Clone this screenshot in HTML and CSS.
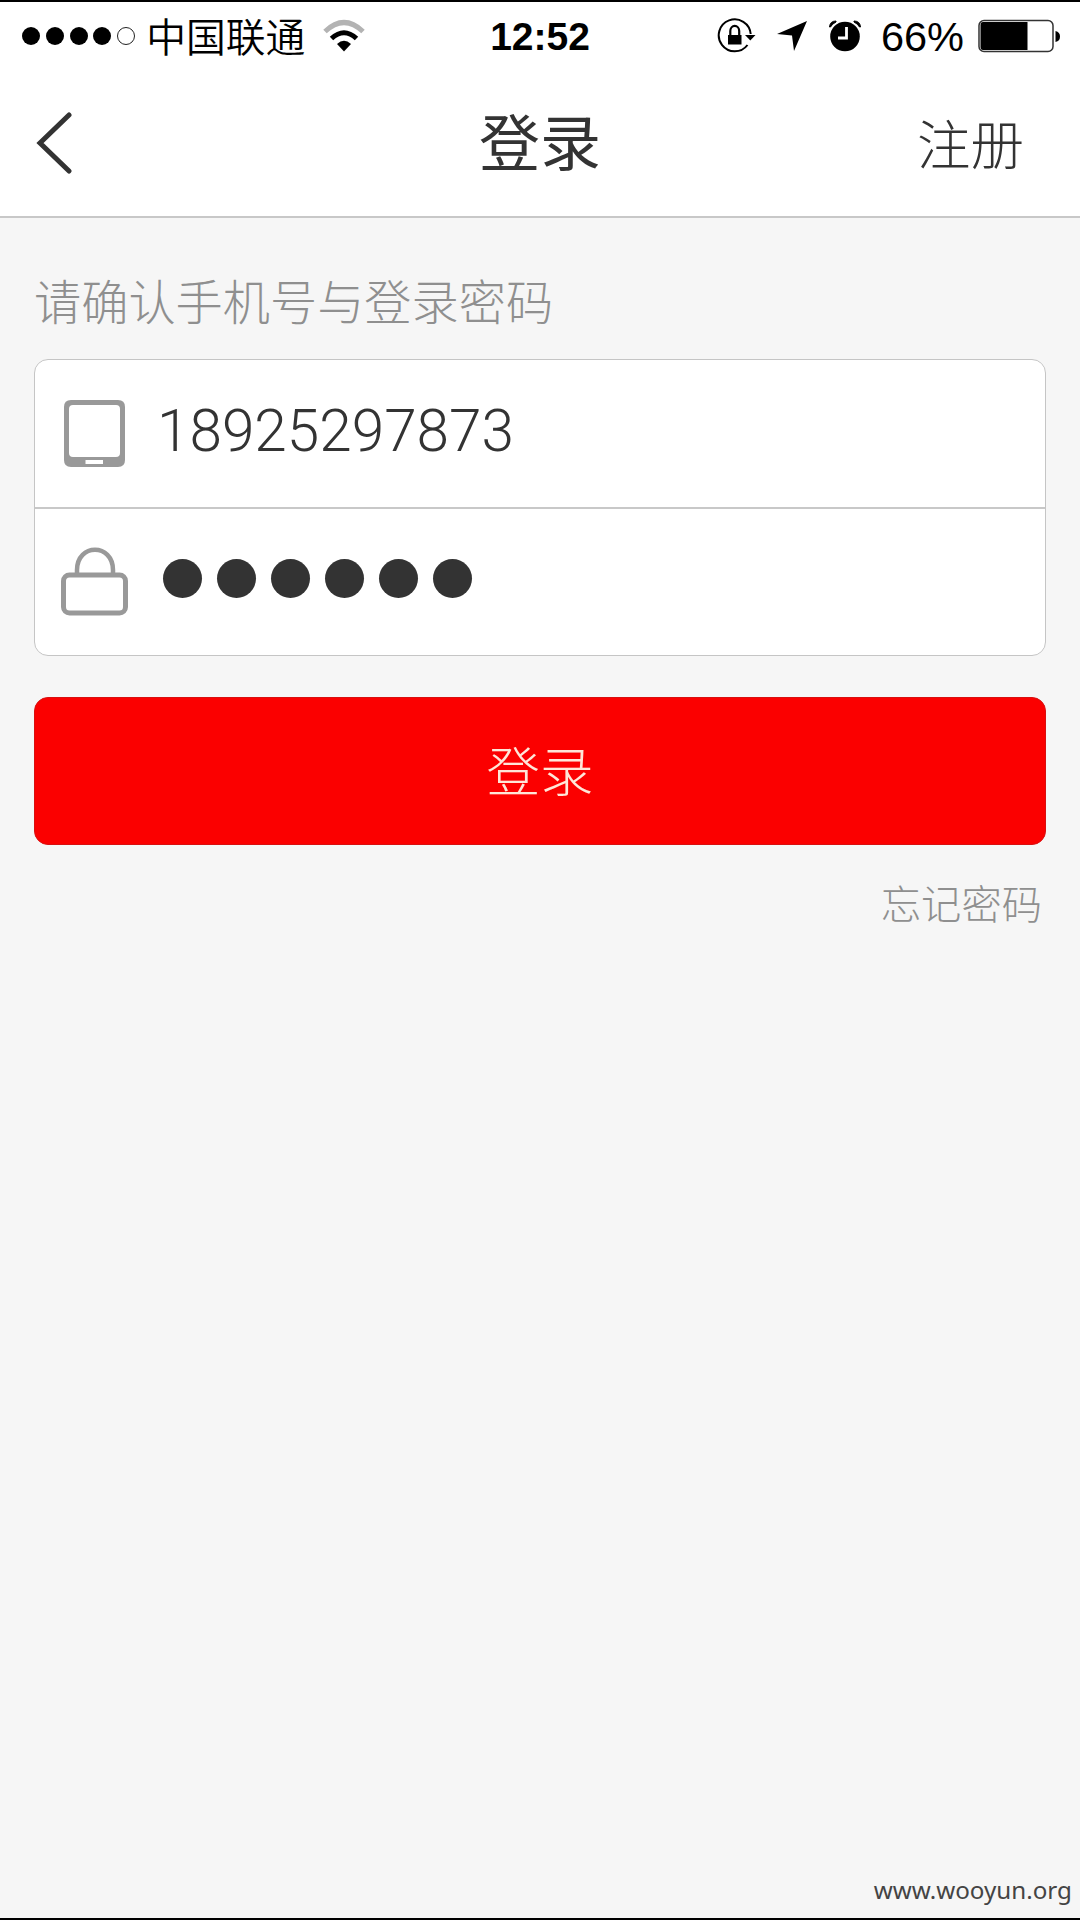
FILE: index.html
```html
<!DOCTYPE html>
<html lang="zh-CN">
<head>
  <meta charset="utf-8">
  <title>登录</title>
  <link rel="stylesheet" href="styles.css">
</head>
<body>
  <div class="screen">
    <!-- Status bar -->
    <div class="status-bar">
      <div class="status-left">
        <div class="signal">
          <span class="dot"></span>
          <span class="dot"></span>
          <span class="dot"></span>
          <span class="dot"></span>
          <span class="dot empty"></span>
        </div>
        <span class="carrier">中国联通</span>
        <svg class="wifi" width="42" height="34" viewBox="0 0 42 34">
          <path d="M2 12.5 Q21 -5.5 40 12.5" fill="none" stroke="#b3b3b3" stroke-width="5"/>
          <path d="M8.5 19.5 Q21 8 33.500 19.500" fill="none" stroke="#000" stroke-width="5"/>
          <path d="M14 25 Q21 18.500 28 25 L21 32.500 Z"/>
        </svg>
      </div>
      <span class="time">12:52</span>
      <div class="status-right">
        <svg class="rotation" width="40" height="36" viewBox="0 0 40 36">
          <path d="M30.500 27 A16 16 0 1 1 33.700 16" fill="none" stroke="#000" stroke-width="2"/>
          <path d="M28 17 H38.500 L33.300 22.500 Z"/>
          <rect x="11" y="17" width="13.500" height="9.500"/>
          <path d="M13.300 18 V13 A4.400 5 0 0 1 22.200 13 V18" fill="none" stroke="#000" stroke-width="2.200"/>
        </svg>
        <svg class="location" width="30" height="30" viewBox="0 0 30 30">
          <path d="M30 0 L17 30 L15 14.500 L0 13 Z"/>
        </svg>
        <svg class="alarm" width="32" height="32" viewBox="0 0 32 32">
          <circle cx="16" cy="16.500" r="14.800"/>
          <path d="M0.500 7 Q1 1 7 1 L7 2 Q3 4 1.500 7 Z M31.500 7 Q31 1 25 1 L25 2 Q29 4 30.500 7 Z" stroke="#000"/>
          <path d="M17.500 7 V18 H9" fill="none" stroke="#fff" stroke-width="2.800"/>
        </svg>
        <span class="percent">66%</span>
        <svg class="battery" width="84" height="34" viewBox="0 0 84 34">
          <rect x="1" y="1.500" width="74" height="31" rx="5" fill="#fff" stroke="#333" stroke-width="1.500"/>
          <path d="M5 3 H49.500 V31 H5 Q2.500 31 2.500 28 V6 Q2.500 3 5 3 Z"/>
          <path d="M77.500 12 Q82 13 82 17.500 Q82 22 77.500 23 Z"/>
        </svg>
      </div>
    </div>

    <!-- Navigation -->
    <div class="navbar">
      <a class="back" href="#">
        <svg width="36" height="62" viewBox="0 0 36 62">
          <path d="M33 3 L4 31 L33 59" fill="none" stroke="#333" stroke-width="5" stroke-linecap="round"/>
        </svg>
      </a>
      <h1 class="title">登录</h1>
      <a class="register" href="#">注册</a>
    </div>

    <!-- Login form -->
    <div class="content">
      <p class="hint">请确认手机号与登录密码</p>
      <div class="fields">
        <div class="field">
          <svg class="field-icon" width="68" height="70" viewBox="0 0 68 70">
            <path fill="#999" fill-rule="evenodd" d="M10 1 H57 Q64 1 64 8 V61 Q64 68 57 68 H10 Q3 68 3 61 V8 Q3 1 10 1 Z M12 6 Q8 6 8 10 V54 Q8 58 12 58 H55 Q59 58 59 54 V10 Q59 6 55 6 Z M24.500 61 V65 H42 V61 Z"/>
          </svg>
          <span class="phone">18925297873</span>
        </div>
        <div class="field">
          <svg class="field-icon" width="68" height="70" viewBox="0 0 68 70">
            <rect x="2.500" y="28" width="62" height="38" rx="6" fill="none" stroke="#999" stroke-width="5"/>
            <path d="M16 28 V23 C16 -4 52 -4 52 23 V28" fill="none" stroke="#999" stroke-width="4.500"/>
          </svg>
          <div class="password">
            <span></span><span></span><span></span><span></span><span></span><span></span>
          </div>
        </div>
      </div>
      <button class="login-btn" type="button">登录</button>
      <a class="forgot" href="#">忘记密码</a>
    </div>

    <div class="watermark">www.wooyun.org</div>
  </div>
</body>
</html>
```
FILE: styles.css
```css
* {
  box-sizing: border-box;
}
body {
  margin: 0;
  background-color: #f6f6f6;
  font-family: "Liberation Sans", "Noto Sans CJK SC", sans-serif;
  color: #333;
}
a {
  color: inherit;
  text-decoration: none;
}
svg {
  display: block;
  flex: none;
}
.screen {
  display: flex;
  flex-direction: column;
  width: 1080px;
  height: 1920px;
  border-top: 2px solid #000;
  border-bottom: 2px solid #000;
}

/* Status bar */
.status-bar {
  display: grid;
  grid-template-columns: 1fr auto 1fr;
  align-items: center;
  height: 68px;
  padding: 0 18px 0 22px;
  background-color: #fff;
  color: #000;
}
.status-left, .status-right {
  display: flex;
  align-items: center;
}
.status-right {
  justify-content: flex-end;
}
.signal {
  display: flex;
  gap: 5.8px;
}
.dot {
  width: 18px;
  height: 18px;
  border-radius: 50%;
  background-color: #000;
}
.dot.empty {
  background-color: #fff;
  border: 1px solid #222;
}
.carrier {
  margin-left: 11px;
  padding-top: 3px;
  font-size: 39.800px;
  font-weight: 350;
  line-height: 64px;
}
.wifi {
  margin-left: 18px;
}
.time {
  margin-right: 4px;
  padding-top: 2px;
  font-size: 39px;
  font-weight: bold;
  line-height: 66px;
}
.rotation {
  margin-right: 20px;
}
.location {
  margin-right: 22px;
}
.alarm {
  margin-right: 20px;
}
.percent {
  margin-right: 14px;
  padding-top: 2px;
  font-size: 41.500px;
  line-height: 66px;
}

/* Navigation */
.navbar {
  display: grid;
  grid-template-columns: 1fr auto 1fr;
  align-items: center;
  height: 148px;
  padding: 0 56px 0 36px;
  background-color: #fff;
  border-bottom: 2px solid #c8c8c8;
}
.title {
  margin: 0 0 0 20px;
  padding-top: 3px;
  font-size: 61px;
  font-weight: normal;
  line-height: 142px;
}
.register {
  justify-self: end;
  padding-bottom: 4px;
  font-size: 53.500px;
  font-weight: 300;
}

/* Login form */
.content {
  display: flex;
  flex-direction: column;
  padding: 53px 34px 0;
}
.hint {
  margin: 0;
  color: #8f8f8f;
  font-size: 47.200px;
  font-weight: 300;
  line-height: 66px;
}
.fields {
  margin-top: 22px;
  background-color: #fff;
  border: 1.500px solid #c5c5c5;
  border-radius: 14px;
}
.field {
  display: flex;
  align-items: center;
  height: 147px;
  padding-left: 26px;
}
.field + .field {
  height: 148px;
  border-top: 2px solid #c8c8c8;
}
.phone {
  margin-left: 28px;
  padding-bottom: 5px;
  font-family: Roboto, sans-serif;
  font-size: 58.500px;
  font-weight: 300;
}
.password {
  display: flex;
  gap: 15px;
  margin-left: 34px;
  padding-bottom: 7px;
}
.password span {
  width: 39px;
  height: 39px;
  border-radius: 50%;
  background-color: #333;
}
.login-btn {
  height: 148px;
  margin-top: 41px;
  padding: 0 0 6px;
  background-color: #fb0000;
  border: 1px solid #d81010;
  border-radius: 14px;
  color: #ffe6d8;
  font-family: inherit;
  font-size: 53.500px;
  font-weight: 300;
}
.forgot {
  align-self: flex-end;
  margin: 32px 4px 0 0;
  color: #8f8f8f;
  font-size: 40.300px;
  font-weight: 300;
  line-height: 58px;
}
.watermark {
  margin: auto 8px 10px auto;
  color: #444;
  font-family: "Noto Sans", sans-serif;
  font-size: 24.200px;
  line-height: 36px;
}
```
